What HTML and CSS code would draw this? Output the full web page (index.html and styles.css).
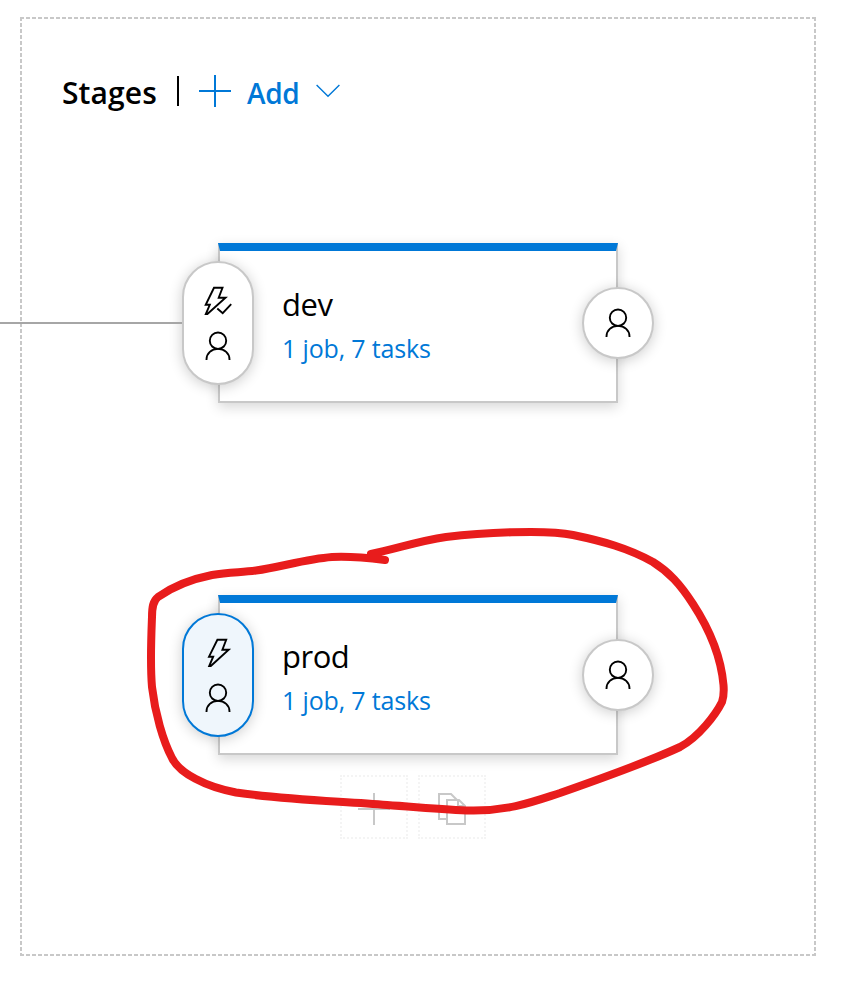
FILE: index.html
```html
<!DOCTYPE html>
<html lang="en">
<head>
<meta charset="utf-8">
<title>Release pipeline stages</title>
<link rel="stylesheet" href="styles.css">
</head>
<body>
<svg class="defs" width="0" height="0" aria-hidden="true">
  <symbol id="person" viewBox="0 0 32 32"><circle cx="16" cy="10.700" r="8.200"/><path d="M4.500 30v-.6C4.500 23.400 9.500 18.900 16 18.900s11.500 4.500 11.500 10.500v.6"/></symbol>
</svg>
<main class="panel">
  <header class="toolbar">
    <h1 class="title">Stages</h1>
    <span class="divider"></span>
    <svg class="plus" viewBox="0 0 32 32"><path d="M16 0v32M0 16h32"/></svg>
    <span class="add">Add</span>
    <svg class="chevron" viewBox="0 0 24 14"><path d="M.6 1 12 12.300 23.400 1"/></svg>
  </header>
  <section class="stage">
    <h2 class="name name-dev">dev</h2>
    <p class="tasks">1 job, 7 tasks</p>
    <div class="pre">
      <svg class="icon" viewBox="0 0 32 32"><path d="M12 2.800H20.500L16.700 12.700H23.500L5.400 29H3.800L7.800 19.800H3.700ZM15.300 23.500 20.700 28.200 29.200 19.200"/></svg>
      <svg class="icon"><use href="#person"/></svg>
    </div>
    <div class="post"><svg class="icon"><use href="#person"/></svg></div>
  </section>
  <section class="stage stage-selected">
    <h2 class="name name-prod">prod</h2>
    <p class="tasks">1 job, 7 tasks</p>
    <div class="pre">
      <svg class="icon" viewBox="0 0 32 32"><path d="M15.400 2.800H24.200L20.400 12.700H26.700L8.800 29H7.200L11.200 19.700H7Z"/></svg>
      <svg class="icon"><use href="#person"/></svg>
    </div>
    <div class="post"><svg class="icon"><use href="#person"/></svg></div>
  </section>
  <div class="actions">
    <div class="action"><svg class="ghost" viewBox="0 0 32 32"><path d="M16 0v32M0 16h32"/></svg></div>
    <div class="action"><svg class="ghost" viewBox="0 0 32 32"><path d="M11 26H3V1h12l6 6M11 7h12l6 6v18H11zM22 7v6h7"/></svg></div>
  </div>
</main>
<div class="connector"></div>
<svg class="ink" viewBox="0 0 843 982"><path d="M385 560C369 558 350 556 332 557C306 559 281 567 256 570.500C241 572.500 229 572 212 575C192 579 172 587 158 597C153 601 152 607 152 617C151 642 150 664 152 687C155 713 163 741 172 758C179 773 206 787 236 792.500C286 800 337 801 387 805C417 807 447 810 471 810.500C510 811 535 801 560 793C600 779 652 760 680 747C699 737 716 714 722 702C724 696 724 691 723.500 685C721 656 708 627 693 604C680 584 669 572 653 562C628 548 602 541 573 535C545 529 480 533 446 537C418 541 396 549 371 554"/></svg>
</body>
</html>
```
FILE: styles.css
```css
* { box-sizing: border-box; }
body {
  margin: 0;
  padding: 17px 0 0 20px;
  height: 982px;
  position: relative;
  overflow: hidden;
  background: #fff;
  font-family: "Open Sans", "Noto Sans", sans-serif;
  color: #000;
}
.defs { position: absolute; }
svg { display: block; fill: none; }
.panel {
  width: 796px;
  height: 939px;
  padding: 51px 42px 0;
  background:
    repeating-linear-gradient(90deg, #c8c8c8 0 4px, #fff 4px 6px) top / 100% 2px no-repeat,
    repeating-linear-gradient(90deg, #c8c8c8 0 4px, #fff 4px 6px) bottom / 100% 2px no-repeat,
    repeating-linear-gradient(#c8c8c8 0 4px, #fff 4px 6px) left / 2px 100% no-repeat,
    repeating-linear-gradient(#c8c8c8 0 4px, #fff 4px 6px) right / 2px 100% no-repeat,
    #fff;
}
.toolbar { display: flex; align-items: center; height: 46px; }
.title {
  width: 115px;
  margin: 3px 0 0;
  font-size: 30px;
  line-height: 40px;
  font-weight: 600;
  letter-spacing: 0.1px;
  white-space: nowrap;
}
.divider { width: 2px; height: 30px; background: #000; margin-right: 20px; }
.plus { width: 32px; height: 32px; margin-right: 16px; stroke: #0078d7; stroke-width: 2; }
.add {
  width: 69px;
  margin-top: 3px;
  color: #0078d7;
  font-size: 28px;
  line-height: 40px;
  font-weight: 600;
  letter-spacing: -0.3px;
}
.chevron { width: 24px; height: 14px; stroke: #0078d7; stroke-width: 1.4; }
.stage {
  position: relative;
  width: 400px;
  height: 160px;
  margin: 129px 0 0 156px;
  padding: 31px 0 0 62px;
  background: #fff;
  border: 2px solid #c8c8c8;
  border-top: 8px solid #0078d7;
  box-shadow: 0 4px 12px rgba(0, 0, 0, .16);
}
.stage-selected { margin-top: 192px; }
.name { margin: 0; font-size: 31px; line-height: 44px; font-weight: 400; }
.name-dev { letter-spacing: -0.4px; }
.name-prod { letter-spacing: -0.5px; }
.tasks {
  margin: 1px 0 0;
  color: #0078d7;
  font-size: 25px;
  line-height: 42px;
  letter-spacing: -0.15px;
  white-space: nowrap;
}
.pre, .post {
  position: absolute;
  display: flex;
  flex-direction: column;
  align-items: center;
  justify-content: center;
  width: 72px;
  background: #fff;
  border: 2px solid #c8c8c8;
  border-radius: 36px;
  box-shadow: 0 2px 14px rgba(0, 0, 0, .2);
}
.pre { left: -38px; top: 10px; height: 124px; gap: 13px; }
.post { right: -38px; top: 36px; height: 72px; }
.stage-selected .pre { background: #eff6fc; border-color: #0078d7; }
.icon { width: 32px; height: 32px; stroke: #000; stroke-width: 1.9; }
.actions { display: flex; gap: 10px; margin: 20px 0 0 278px; }
.action {
  display: flex;
  align-items: center;
  justify-content: center;
  width: 68px;
  height: 64px;
  border: 2px dotted #f4f4f4;
}
.ghost { width: 32px; height: 32px; margin-top: 4px; stroke: #c8c8c8; stroke-width: 2; }
.connector { position: absolute; left: 0; top: 322px; width: 182px; height: 2px; background: #a6a6a6; }
.ink { position: absolute; left: 0; top: 0; width: 843px; height: 982px; pointer-events: none; }
.ink path { stroke: #e81c1c; stroke-width: 8; stroke-linecap: round; stroke-linejoin: round; }
```
